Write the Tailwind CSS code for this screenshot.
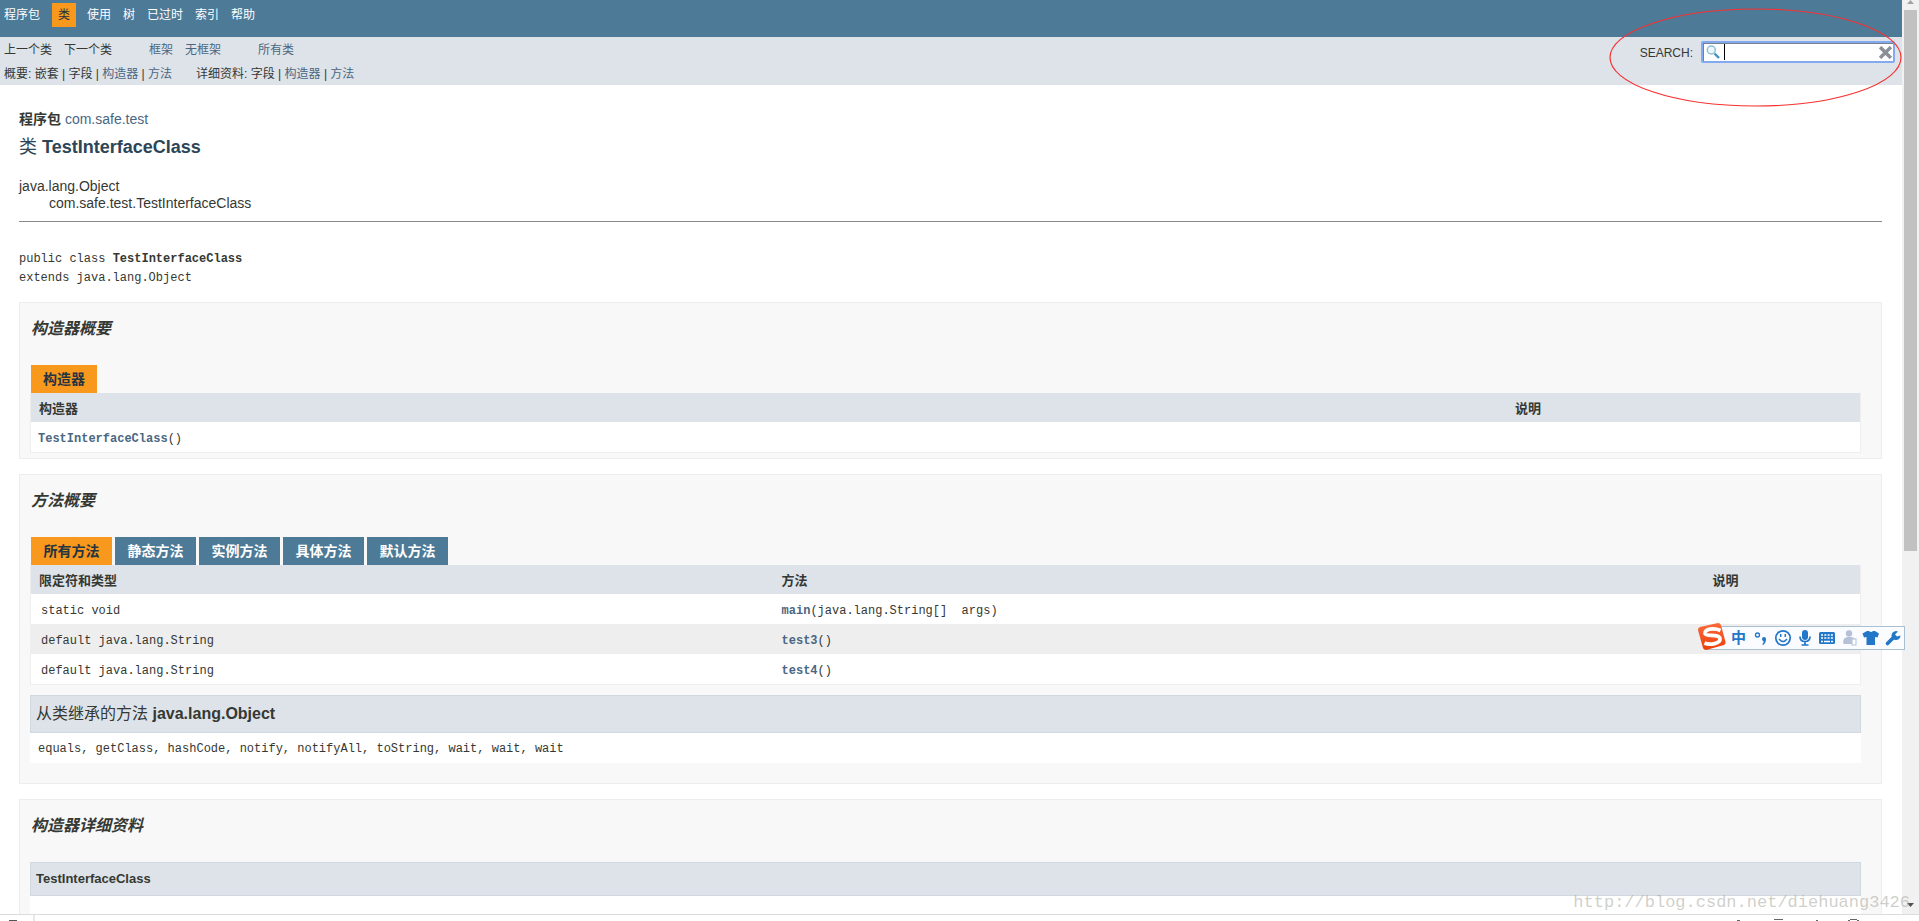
<!DOCTYPE html>
<html lang="zh-CN">
<head>
<meta charset="utf-8">
<title>TestInterfaceClass</title>
<script src="https://cdn.jsdelivr.net/npm/@tailwindcss/browser@4"></script>
</head>
<body class="relative flex h-screen flex-col overflow-hidden bg-white font-['Liberation_Sans','Noto_Sans_CJK_SC',sans-serif] text-[14px] text-[#353833]">
<div class="flex min-h-0 flex-1">
  <div class="min-w-0 flex-1 overflow-hidden">
    <nav class="h-[37px] bg-[#4d7a97] pt-[3px] pl-1 text-xs leading-6 text-white">
      <ul class="flex gap-3">
        <li><a href="#">程序包</a></li>
        <li class="bg-[#f8981d] px-1.5 text-[#253441]">类</li>
        <li class="-ml-px"><a href="#">使用</a></li>
        <li><a href="#">树</a></li>
        <li><a href="#">已过时</a></li>
        <li><a href="#">索引</a></li>
        <li><a href="#">帮助</a></li>
      </ul>
    </nav>
    <div class="flex h-12 justify-between bg-[#dee3e9] pt-px pl-1 text-xs leading-6">
      <div>
        <div class="flex gap-[37px]">
          <ul class="flex gap-3"><li>上一个类</li><li>下一个类</li></ul>
          <ul class="flex gap-3 text-[#4a6782]"><li><a href="#">框架</a></li><li><a href="#">无框架</a></li></ul>
          <ul class="text-[#4a6782]"><li><a href="#">所有类</a></li></ul>
        </div>
        <div class="flex gap-6">
          <p>概要: 嵌套 | 字段 | <a href="#" class="text-[#4a6782]">构造器</a> | <a href="#" class="text-[#4a6782]">方法</a></p>
          <p>详细资料: 字段 | <a href="#" class="text-[#4a6782]">构造器</a> | <a href="#" class="text-[#4a6782]">方法</a></p>
        </div>
      </div>
      <div class="flex items-start gap-2 pt-[3px] pr-[7px]">
        <label for="search">SEARCH:</label>
        <div class="flex h-[22px] w-[194px] items-center rounded-xs border-2 border-[#83aaf0] bg-white pr-px pl-[3px] shadow-[inset_1px_1px_0_#77808f]">
          <svg class="size-[14px] shrink-0" viewBox="0 0 14 14" fill="none"><path d="M8.5 8.5 13 13" stroke="#3c92c4" stroke-width="2.4"/><circle cx="5.3" cy="5" r="4" fill="#eef7fb" stroke="#8abfd6" stroke-width="1.5"/></svg>
          <span class="ml-[4px] h-4 w-px shrink-0 bg-black"></span>
          <input id="search" type="text" class="min-w-0 flex-1 outline-none">
          <button type="button" aria-label="清除"><svg class="size-[13px]" viewBox="0 0 13 13"><path d="M2.3 2.3 10.7 10.7M10.7 2.3 2.3 10.7" stroke="#8b8f97" stroke-width="3.4" stroke-linecap="square"/></svg></button>
        </div>
      </div>
    </div>

    <main class="pt-6 pr-5 pl-[19px]">
      <div class="leading-5"><b>程序包</b> <a href="#" class="text-[#4a6782]">com.safe.test</a></div>
      <h1 class="mt-[6px] text-[18px] leading-6 font-bold text-[#2c4557]"><span class="font-normal">类</span> TestInterfaceClass</h1>
      <ul class="mt-[19px] leading-[17px]">
        <li>java.lang.Object</li>
        <li class="pl-[30px]">com.safe.test.TestInterfaceClass</li>
      </ul>
      <hr class="mt-[9px] border-t border-[#888888]">
      <pre class="mt-7 font-['Liberation_Mono',monospace] text-xs leading-[19px]">public class <b>TestInterfaceClass</b>
extends java.lang.Object</pre>

      <section class="mt-[14px] border border-[#ededed] bg-[#f8f8f8] pr-5 pb-[5px] pl-[10px]">
        <h2 class="pt-[14px] pl-px text-base leading-6 font-bold italic">构造器概要</h2>
        <div class="mt-6 flex pl-px leading-7 font-bold"><span class="bg-[#f8981d] px-3 text-[#253441]">构造器</span></div>
        <table class="w-full table-fixed border-separate border-spacing-0 border border-t-0 border-[#eeeeee] bg-white text-left">
          <colgroup><col class="w-[80.7%]"><col></colgroup>
          <thead class="bg-[#dee3e9] text-[13px] leading-[27px]"><tr><th class="px-2 pt-[2px]">构造器</th><th class="px-2 pt-[2px]">说明</th></tr></thead>
          <tbody class="font-['Liberation_Mono',monospace] text-xs leading-[26px]"><tr><td class="px-[7px] pt-1"><a href="#" class="font-bold text-[#4a6782]">TestInterfaceClass</a>()</td><td></td></tr></tbody>
        </table>
      </section>

      <section class="mt-[15px] border border-[#ededed] bg-[#f8f8f8] pr-5 pb-5 pl-[10px]">
        <h2 class="pt-[14px] pl-px text-base leading-6 font-bold italic">方法概要</h2>
        <div class="mt-6 flex gap-[3px] pl-px leading-7 font-bold text-white">
          <button type="button" class="w-[81px] bg-[#f8981d] text-[#253441]">所有方法</button>
          <button type="button" class="w-[81px] bg-[#4d7a97]">静态方法</button>
          <button type="button" class="w-[81px] bg-[#4d7a97]">实例方法</button>
          <button type="button" class="w-[81px] bg-[#4d7a97]">具体方法</button>
          <button type="button" class="w-[81px] bg-[#4d7a97]">默认方法</button>
        </div>
        <table class="w-full table-fixed border-separate border-spacing-0 border border-t-0 border-[#eeeeee] bg-white text-left">
          <colgroup><col class="w-[40.6%]"><col class="w-[50.9%]"><col></colgroup>
          <thead class="bg-[#dee3e9] text-[13px] leading-[27px]"><tr><th class="px-2 pt-[2px]">限定符和类型</th><th class="px-2 pt-[2px]">方法</th><th class="px-2 pt-[2px]">说明</th></tr></thead>
          <tbody class="font-['Liberation_Mono',monospace] text-xs leading-[26px]">
            <tr><td class="px-[10px] pt-1">static void</td><td class="px-2 pt-1"><a href="#" class="font-bold text-[#4a6782]">main</a>(java.lang.String[]&nbsp; args)</td><td></td></tr>
            <tr class="bg-[#eeeeef]"><td class="px-[10px] pt-1">default java.lang.String</td><td class="px-2 pt-1"><a href="#" class="font-bold text-[#4a6782]">test3</a>()</td><td></td></tr>
            <tr><td class="px-[10px] pt-1">default java.lang.String</td><td class="px-2 pt-1"><a href="#" class="font-bold text-[#4a6782]">test4</a>()</td><td></td></tr>
          </tbody>
        </table>
        <h3 class="mt-[10px] border border-[#d0d9e0] bg-[#dee3e9] px-[5px] text-base leading-9 font-bold"><span class="font-normal">从类继承的方法</span> java.lang.Object</h3>
        <p class="bg-white px-2 pt-[2px] font-['Liberation_Mono',monospace] text-xs leading-7">equals, getClass, hashCode, notify, notifyAll, toString, wait, wait, wait</p>
      </section>

      <section class="mt-[15px] border border-[#ededed] bg-[#f8f8f8] pr-5 pb-5 pl-[10px]">
        <h2 class="pt-[14px] pl-px text-base leading-6 font-bold italic">构造器详细资料</h2>
        <h3 class="mt-6 border border-[#d0d9e0] bg-[#dee3e9] px-[5px] text-[13px] leading-8 font-bold">TestInterfaceClass</h3>
        <div class="h-16 bg-white"></div>
      </section>
    </main>
  </div>

  <!-- Scrollbar -->
  <div class="flex w-[17px] shrink-0 flex-col items-center bg-[#f1f1f1]">
    <svg class="h-[10px] w-[9px] shrink-0" viewBox="0 0 9 10"><path d="M1 4 4.5 0 8 4z" fill="#a3a3a3"/></svg>
    <div class="h-[59.2%] w-[13px] bg-[#c1c1c1]"></div>
    <svg class="mt-auto mb-[7px] h-1 w-[7px] shrink-0" viewBox="0 0 7 4"><path d="M0 0h7L3.5 4z" fill="#505050"/></svg>
  </div>
</div>

<!-- Top edge of the download shelf -->
<div class="flex h-[7px] shrink-0 items-end justify-between border-t border-[#dcdcdc] bg-white">
  <div class="flex h-full w-[35px] items-end border-r-2 border-[#e8e8e8] pl-[9px]"><span class="h-px w-2 bg-[#555555]"></span></div>
  <svg class="mr-[60px] h-[2px] w-[124px]" viewBox="0 0 124 2" fill="#666"><path d="M2 1h3v1H2zM39 0h9v1H39zM81 1h2v1H81zM115 0h7v1h-7zM113 1h2v1h-2zM122 1h2v1h-2z"/></svg>
</div>

<!-- Hand-drawn marker round the search box -->
<svg class="pointer-events-none absolute top-2 right-[17px] h-[99px] w-[293px]" viewBox="0 0 293 99" fill="none"><ellipse cx="146.500" cy="49.500" rx="145.500" ry="48.500" stroke="#f83030" stroke-width="1.200"/></svg>

<!-- Input method toolbar -->
<svg class="absolute top-[622px] right-[13px] h-[30px] w-[208px]" viewBox="0 0 208 30" role="img" aria-label="输入法">
  <defs><linearGradient id="s" x1="0" y1="0" x2="0" y2="1"><stop offset="0" stop-color="#fa6a3a"/><stop offset="1" stop-color="#ee3f08"/></linearGradient></defs>
  <rect x="8.500" y="4.500" width="198" height="23" fill="#fafcff" stroke="#a9bfd2"/>
  <path d="M0 8Q0 5.500 2 5L20 1Q22 1 23 3L27.500 20Q28 22 26 23L8 28Q6 28 5 26Z" fill="url(#s)"/>
  <path d="M22.500 8.500C16 5.500 6 7 7 11.500C8 15 21 11.500 22 16.500C22.500 21.500 12 23.500 6.500 21" fill="none" stroke="#fff" stroke-width="3.800"/>
  <text x="33" y="21" font-size="15" font-weight="700" fill="#2277c8" font-family="Noto Sans CJK SC, sans-serif">中</text>
  <circle cx="59.500" cy="13" r="2" fill="none" stroke="#2277c8" stroke-width="1.300"/>
  <path d="M64 17a2 2 0 1 1 4 0q0 4-3 6l-.8-.8q1.500-1.500 1.500-3Q64 19 64 17z" fill="#2277c8"/>
  <circle cx="85" cy="16" r="7.200" fill="none" stroke="#2277c8" stroke-width="1.700"/>
  <path d="M82.700 12v3M87.300 12v3M81 17q4 5 8 0" fill="none" stroke="#2277c8" stroke-width="1.500"/>
  <rect x="104" y="8" width="6" height="10" rx="3" fill="#2277c8"/>
  <path d="M102 14.500q0 5 5 5t5-5M107 19.500V23M103.500 23h7" fill="none" stroke="#2277c8" stroke-width="1.700"/>
  <rect x="121" y="10" width="16" height="12" rx="1.500" fill="#2277c8"/>
  <path d="M123 13h12M123 16h12" stroke="#fff" stroke-width="1.600" stroke-dasharray="2 1.300"/><path d="M123 19.500h2M126 19.500h6M133 19.500h2" stroke="#fff" stroke-width="1.400"/>
  <circle cx="151" cy="11.500" r="3.200" fill="#b5c1d6"/><path d="M145 21q0-6 5-6h3q5 0 5 7h-12z" fill="#b5c1d6"/><rect x="154" y="17" width="4" height="6" fill="#fff" stroke="#b5c1d6"/>
  <path d="M169 9l2 0q2 2 4 0l2 0 4 2.500-1.500 4-2.500-.5V23h-8.500V15l-2.500.5-1.500-4z" fill="#2277c8"/>
  <path d="M189.500 21.500 196 15" stroke="#2277c8" stroke-width="3.600" stroke-linecap="round"/>
  <path d="M200 9.500a4.500 4.500 0 1 0 2.500 4l-3.500 1-2-2z" fill="#2277c8"/>
</svg>

<!-- Watermark -->
<div class="pointer-events-none absolute right-[9px] bottom-[6px] font-['Liberation_Mono',monospace] text-[17px] leading-6 text-[#a0a096]/50">http://blog.csdn.net/diehuang3426</div>
</body>
</html>
